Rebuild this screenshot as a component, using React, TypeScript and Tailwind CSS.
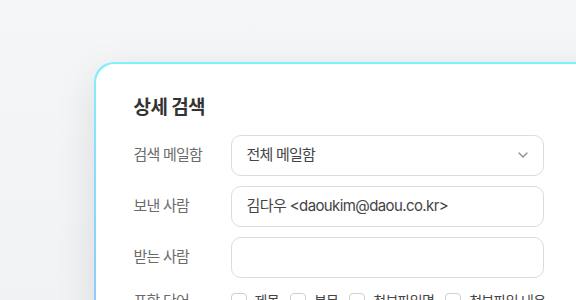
import React from "react";
import { ChevronDown } from "lucide-react";

const font = { fontFamily: 'Inter, "Noto Sans CJK KR", sans-serif' };

function Row({ label, children }: { label: string; children: React.ReactNode }) {
  return (
    <div className="flex items-center">
      <div className="w-[97px] shrink-0 text-[15px] text-[#6b6b6b] tracking-[-0.8px]">{label}</div>
      {children}
    </div>
  );
}

function Check({ label }: { label: string }) {
  return (
    <label className="flex items-center gap-[8px] mr-[11px]">
      <span className="w-[16px] h-[16px] rounded-[4px] border border-[#cfcfcf] bg-white" />
      <span className="text-[14px] text-[#444] tracking-[-0.7px]">{label}</span>
    </label>
  );
}

export default function App() {
  return (
    <div
      className="w-[576px] h-[300px] overflow-hidden bg-gradient-to-b from-[#f5f6f8] to-[#f1f2f4] pl-[94px] pt-[62px]"
      style={font}
    >
      <div className="w-[560px] rounded-[20px] bg-gradient-to-b from-[#7ff1fa] via-[#8ad8fb] to-[#94c2fc] p-[1.5px] shadow-[0_12px_40px_rgba(0,0,0,0.10)]">
        <div className="rounded-[18.5px] bg-white pl-[38px] pt-[30px] pb-[40px]">
          <h2 className="text-[19px] leading-[28px] font-bold text-[#333] tracking-[-0.6px]">상세 검색</h2>
          <div className="mt-[13px] flex flex-col gap-[10px]">
            <Row label="검색 메일함">
              <div className="w-[313px] h-[41px] rounded-[10px] border border-[#dcdcdc] flex items-center justify-between pl-[15px] pr-[12px]">
                <span className="text-[15px] text-[#444] tracking-[-0.8px]">전체 메일함</span>
                <ChevronDown size={16} strokeWidth={1.8} className="text-[#8a8a8a]" />
              </div>
            </Row>
            <Row label="보낸 사람">
              <div className="w-[313px] h-[41px] rounded-[10px] border border-[#dcdcdc] flex items-center pl-[15px]">
                <span className="text-[15px] text-[#444] tracking-[-0.6px]">김다우 &lt;daoukim@daou.co.kr&gt;</span>
              </div>
            </Row>
            <Row label="받는 사람">
              <div className="w-[313px] h-[41px] rounded-[10px] border border-[#dcdcdc]" />
            </Row>
            <div className="flex items-center mt-[2px]">
              <div className="w-[97px] shrink-0 text-[15px] text-[#6b6b6b] tracking-[-0.8px]">포함 단어</div>
              <Check label="제목" />
              <Check label="본문" />
              <Check label="첨부파일명" />
              <Check label="첨부파일 내용" />
            </div>
          </div>
        </div>
      </div>
    </div>
  );
}
